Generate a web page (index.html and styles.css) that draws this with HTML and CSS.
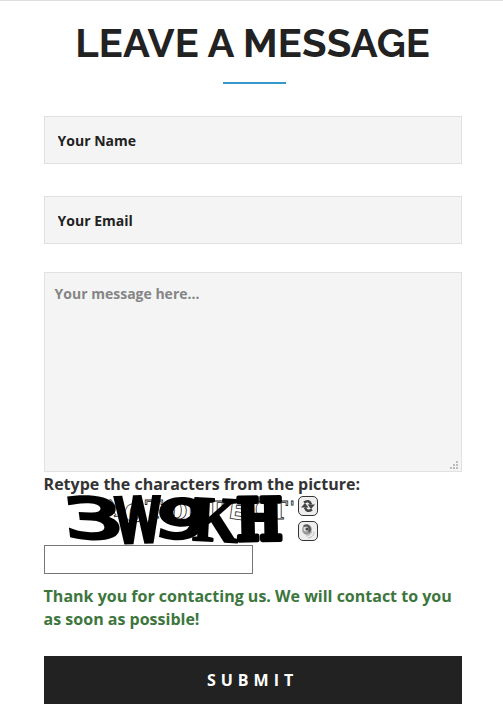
FILE: index.html
```html
<!DOCTYPE html>
<html lang="en">
<head>
<meta charset="utf-8">
<title>Leave a message</title>
<link rel="stylesheet" href="styles.css">
</head>
<body>
<main class="contact">
  <h1 class="title">LEAVE A MESSAGE</h1>
  <div class="rule"></div>
  <form class="form">
    <input class="field" type="text" placeholder="Your Name">
    <input class="field" type="text" placeholder="Your Email">
    <div class="message-wrap">
      <textarea class="message" placeholder="Your message here..."></textarea>
      <svg class="grip" width="8" height="8" fill="#bdbdbd"><path d="M6 0h2v2H6zM3 3h2v2H3zM6 3h2v2H6zM0 6h2v2H0zM3 6h2v2H3zM6 6h2v2H6z"/></svg>
    </div>
    <label class="label" for="code">Retype the characters from the picture:</label>
    <div class="captcha">
      <svg class="code" width="250" height="50" viewBox="0 0 250 50">
        <g class="outline">
          <text transform="translate(60 24) rotate(-12)">A</text>
          <text transform="translate(79 25) rotate(8)">O</text>
          <text transform="translate(101 23)">T</text>
          <text transform="translate(122 24) rotate(3)">D</text>
          <text transform="translate(143 24)">E</text>
          <text transform="translate(162 24)">T</text>
          <text class="wide" transform="translate(184 23) rotate(8)">E</text>
          <text transform="translate(207 25) rotate(-5)">C</text>
          <text transform="translate(226 24)">T</text>
          <text transform="translate(246 17) scale(.6)">'</text>
        </g>
        <text class="sans" transform="translate(22 42) rotate(2) skewX(9) scale(1.7 1)">3</text>
        <text class="sans" transform="translate(72 47) rotate(-2) scale(.84 1.08)">W</text>
        <text class="sans" transform="translate(109 41) rotate(4) skewX(-5) scale(1.5 .96)">9</text>
        <text class="serif" transform="translate(148 45) rotate(3) scale(1.05 1.15)">K</text>
        <text class="slab" transform="translate(193 45) rotate(-1) scale(.86 1.02)">H</text>
      </svg>
      <div class="tools">
        <button class="tool" type="button" aria-label="Refresh">
          <svg width="18" height="18" viewBox="0 0 18 18"><path d="M5 5.500Q10 2 12 7.500M13 12.500Q8 16 6 10.500" fill="none" stroke="#444" stroke-width="2.500"/><path d="M8.500 7.500H16L12 12zM2 10.500H9.500L6 6z" fill="#444"/></svg>
        </button>
        <button class="tool" type="button" aria-label="Listen">
          <svg width="18" height="18" viewBox="0 0 18 18"><ellipse cx="8" cy="7.500" rx="4.800" ry="5.300" fill="#999"/><path d="M4 4C7 1 12 3 12 8L10 11C9 7 7 6 4 4" fill="#555"/><circle cx="7" cy="7" r="2.500" fill="#ddd"/><circle cx="8" cy="7" r="1.500" fill="#444"/><path d="M7 14q5 0 6-5M9 16q6-1 6-6" fill="none" stroke="#bbb"/></svg>
        </button>
      </div>
    </div>
    <input class="answer" id="code" type="text">
    <p class="success">Thank you for contacting us. We will contact to you as soon as possible!</p>
    <button class="submit" type="button">SUBMIT</button>
  </form>
</main>
</body>
</html>
```
FILE: styles.css
```css
* { box-sizing: border-box; }
body {
  margin: 0;
  background: #fff;
  color: #333;
  font: 600 16px/23px "Open Sans", sans-serif;
}
.contact {
  height: 727px;
  padding: 20px 41.4px 0 43.6px;
  border-top: 1px solid #ddd;
}
.title {
  margin: 0 -20px;
  color: #222;
  font: 700 40px/44px Raleway, Lato, sans-serif;
  letter-spacing: 0.15px;
  text-align: center;
  white-space: nowrap;
}
.rule {
  width: 63px;
  height: 2px;
  margin: 17px auto 32px 179px;
  background: #3498ca;
}
.form { display: flex; flex-direction: column; }
.field {
  width: 100%;
  height: 48px;
  margin: 0 0 32px;
  padding: 0 13px;
  border: 1px solid #e1e1e1;
  border-radius: 0;
  background: #f4f4f4;
  font: 700 14px "Open Sans", sans-serif;
}
.field::placeholder { color: #222; opacity: 1; }
.field + .field { margin-bottom: 28px; }
.message-wrap { position: relative; height: 200px; }
.message {
  display: block;
  width: 100%;
  height: 200px;
  padding: 11px 10px;
  border: 1px solid #e1e1e1;
  background: #f4f4f4;
  font: 700 14px/20px "Open Sans", sans-serif;
  resize: none;
}
.message::placeholder { color: #858585; opacity: 1; }
.grip { position: absolute; right: 4px; bottom: 3px; }
.label { height: 23px; line-height: 25px; font-weight: 700; white-space: nowrap; }
.captcha { display: flex; gap: 4px; height: 50px; }
.code { display: block; }
.code text { vector-effect: non-scaling-stroke; }
.tools { display: flex; flex-direction: column; gap: 5px; padding-top: 1px; }
.tool {
  width: 20px;
  height: 20px;
  padding: 0;
  border: 1px solid #333;
  border-radius: 5px;
  background: #eee;
}
.tool svg { display: block; }
.sans {
  font: 400 55px "DejaVu Sans", sans-serif;
  stroke: #000;
  stroke-width: 5;
}
.serif {
  font: 700 56px "Liberation Serif", serif;
  stroke: #000;
  stroke-width: 2;
  stroke-linejoin: round;
}
.slab {
  font: 700 56px "DejaVu Serif", serif;
  stroke: #000;
  stroke-width: 5;
  stroke-linejoin: round;
}
.outline {
  fill: #fff;
  stroke: #222;
  stroke-width: 0.8;
  font: 700 24px "DejaVu Serif", serif;
}
.wide { font-family: "DejaVu Sans", sans-serif; }
.answer {
  width: 209px;
  height: 29px;
  border: 1px solid #767676;
  border-radius: 0;
  background: #fff;
}
.success { margin: 11px 0 25px; color: #3c763d; font-weight: 700; }
.submit {
  height: 48px;
  padding: 0;
  border: 0;
  background: #222;
  color: #fff;
  font: 700 16px "Open Sans", sans-serif;
  letter-spacing: 5px;
}
```
